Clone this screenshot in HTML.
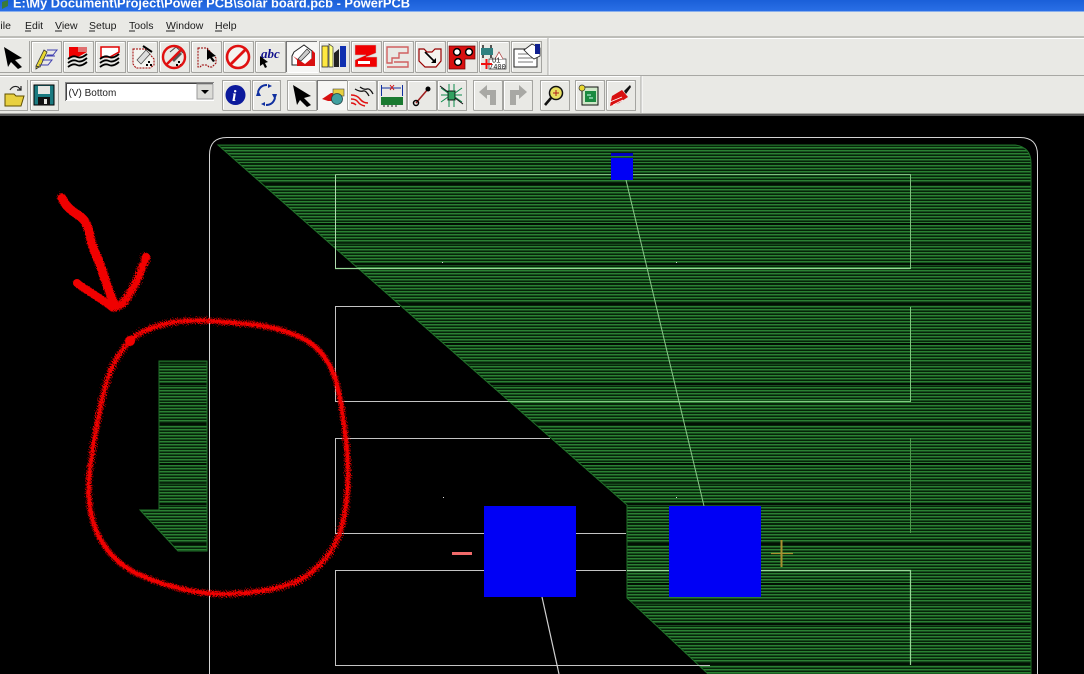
<!DOCTYPE html>
<html><head><meta charset="utf-8"><style>
html,body{margin:0;padding:0;background:#000;width:1084px;height:674px;overflow:hidden}
svg{display:block;position:absolute;left:0;top:0}
.m{font:10.5px "Liberation Sans",sans-serif;fill:#1a1a1a}
</style></head><body>
<svg width="1084" height="674" viewBox="0 0 1084 674" xmlns="http://www.w3.org/2000/svg">
<defs>
<linearGradient id="tb" x1="0" y1="0" x2="0" y2="1"><stop offset="0" stop-color="#1a5fd8"/><stop offset="1" stop-color="#2a6fe6"/></linearGradient>
<pattern id="h" width="3" height="3" patternUnits="userSpaceOnUse"><rect width="3" height="3" fill="#062409"/><rect width="3" height="1" fill="#2b8033"/><rect y="1" width="3" height="1" fill="#174f1e"/></pattern>
<pattern id="d" width="40" height="40" patternUnits="userSpaceOnUse"><rect y="23" width="40" height="2" fill="#021004"/><rect y="3" width="40" height="1" fill="#041c08" opacity=".8"/></pattern>
<filter id="rough" x="-10%" y="-10%" width="120%" height="120%"><feTurbulence type="fractalNoise" baseFrequency=".9" numOctaves="2" seed="4"/><feDisplacementMap in="SourceGraphic" scale="7"/></filter>
</defs>
<!-- chrome -->
<rect width="1084" height="116" fill="#e9e9e5"/>
<rect width="1084" height="11" fill="url(#tb)"/>
<rect y="11" width="1084" height="1" fill="#8ab0ec"/>
<text x="13" y="7.500" font-family="Liberation Sans,sans-serif" font-weight="bold" font-size="13" fill="#fff" textLength="397" lengthAdjust="spacingAndGlyphs">E:\My Document\Project\Power PCB\solar board.pcb - PowerPCB</text>
<path d="M2 2l6-2v6l-6 3z" fill="#3a7a3a"/>
<text class="m" x="-6" y="29">File</text>
<text class="m" x="25" y="29">Edit</text><path d="M25 31h6" stroke="#222"/>
<text class="m" x="55" y="29">View</text><path d="M55 31h7" stroke="#222"/>
<text class="m" x="89" y="29">Setup</text><path d="M89 31h6" stroke="#222"/>
<text class="m" x="129" y="29">Tools</text><path d="M129 31h6" stroke="#222"/>
<text class="m" x="166" y="29">Window</text><path d="M166 31h9" stroke="#222"/>
<text class="m" x="215" y="29">Help</text><path d="M215 31h7" stroke="#222"/>
<rect y="36" width="1084" height="2" fill="#bdbdb8"/><rect y="38" width="1084" height="1" fill="#fff"/>
<path d="M548 38v37" stroke="#a8a8a4"/><path d="M549 38v37" stroke="#fff"/>
<rect y="75" width="1084" height="1" fill="#a8a8a4"/><rect y="76" width="642" height="1" fill="#fff"/>
<path d="M641 76v37" stroke="#a8a8a4"/><path d="M642 76v37" stroke="#fff"/>
<rect y="113" width="1084" height="1" fill="#a8a8a4"/><rect y="114" width="1084" height="2" fill="#555"/>
<!-- button frames -->
<g fill="none" stroke-width="1">
<g>
<path d="M-1 72.500H29.500V41" stroke="#a4a4a0"/>
<path d="M31.500 72V41.500H61M61.500 41V72.500H31.500" stroke="#a4a4a0"/><path d="M32.500 71V42.500H60" stroke="#fff"/>
<path d="M63.500 72V41.500H93M93.500 41V72.500H63.500" stroke="#a4a4a0"/><path d="M64.500 71V42.500H92" stroke="#fff"/>
<path d="M95.500 72V41.500H125M125.500 41V72.500H95.500" stroke="#a4a4a0"/><path d="M96.500 71V42.500H124" stroke="#fff"/>
<path d="M127.500 72V41.500H157M157.500 41V72.500H127.500" stroke="#a4a4a0"/><path d="M128.500 71V42.500H156" stroke="#fff"/>
<path d="M159.500 72V41.500H189M189.500 41V72.500H159.500" stroke="#a4a4a0"/><path d="M160.500 71V42.500H188" stroke="#fff"/>
<path d="M191.500 72V41.500H221M221.500 41V72.500H191.500" stroke="#a4a4a0"/><path d="M192.500 71V42.500H220" stroke="#fff"/>
<path d="M223.500 72V41.500H253M253.500 41V72.500H223.500" stroke="#a4a4a0"/><path d="M224.500 71V42.500H252" stroke="#fff"/>
<path d="M255.500 72V41.500H285M285.500 41V72.500H255.500" stroke="#a4a4a0"/><path d="M256.500 71V42.500H284" stroke="#fff"/>
<rect x="287" y="41" width="30" height="31" fill="#f6f6f4" stroke="none"/><path d="M286.500 72V41.500H317" stroke="#777"/><path d="M287.500 72.500H318V41" stroke="#fff"/>
<path d="M319.500 72V41.500H349M349.500 41V72.500H319.500" stroke="#a4a4a0"/><path d="M320.500 71V42.500H348" stroke="#fff"/>
<path d="M351.500 72V41.500H381M381.500 41V72.500H351.500" stroke="#a4a4a0"/><path d="M352.500 71V42.500H380" stroke="#fff"/>
<path d="M383.500 72V41.500H413M413.500 41V72.500H383.500" stroke="#a4a4a0"/><path d="M384.500 71V42.500H412" stroke="#fff"/>
<path d="M415.500 72V41.500H445M445.500 41V72.500H415.500" stroke="#a4a4a0"/><path d="M416.500 71V42.500H444" stroke="#fff"/>
<path d="M447.500 72V41.500H477M477.500 41V72.500H447.500" stroke="#a4a4a0"/><path d="M448.500 71V42.500H476" stroke="#fff"/>
<path d="M479.500 72V41.500H509M509.500 41V72.500H479.500" stroke="#a4a4a0"/><path d="M480.500 71V42.500H508" stroke="#fff"/>
<path d="M511.500 72V41.500H541M541.500 41V72.500H511.500" stroke="#a4a4a0"/><path d="M512.500 71V42.500H540" stroke="#fff"/>
</g>
<g>
<path d="M-1 110.500H27.500V80" stroke="#a4a4a0"/>
<path d="M30.500 110V80.500H58M58.500 80V110.500H30.500" stroke="#a4a4a0"/><path d="M31.500 109V81.500H57" stroke="#fff"/>
<path d="M222.500 110V80.500H250M250.500 80V110.500H222.500" stroke="#a4a4a0"/><path d="M223.500 109V81.500H249" stroke="#fff"/>
<path d="M252.500 110V80.500H280M280.500 80V110.500H252.500" stroke="#a4a4a0"/><path d="M253.500 109V81.500H279" stroke="#fff"/>
<path d="M287.500 110V80.500H316M316.500 80V110.500H287.500" stroke="#a4a4a0"/><path d="M288.500 109V81.500H315" stroke="#fff"/>
<rect x="318" y="81" width="29" height="29" fill="#f6f6f4" stroke="none"/><path d="M317.500 110V80.500H347" stroke="#777"/>
<path d="M347.500 110V80.500H376M376.500 80V110.500H347.500" stroke="#a4a4a0"/><path d="M348.500 109V81.500H375" stroke="#fff"/>
<path d="M377.500 110V80.500H406M406.500 80V110.500H377.500" stroke="#a4a4a0"/><path d="M378.500 109V81.500H405" stroke="#fff"/>
<path d="M407.500 110V80.500H436M436.500 80V110.500H407.500" stroke="#a4a4a0"/><path d="M408.500 109V81.500H435" stroke="#fff"/>
<path d="M437.500 110V80.500H466M466.500 80V110.500H437.500" stroke="#a4a4a0"/><path d="M438.500 109V81.500H465" stroke="#fff"/>
<path d="M473.500 110V80.500H502M502.500 80V110.500H473.500" stroke="#a4a4a0"/><path d="M474.500 109V81.500H501" stroke="#fff"/>
<path d="M503.500 110V80.500H532M532.500 80V110.500H503.500" stroke="#a4a4a0"/><path d="M504.500 109V81.500H531" stroke="#fff"/>
<path d="M540.500 110V80.500H569M569.500 80V110.500H540.500" stroke="#a4a4a0"/><path d="M541.500 109V81.500H568" stroke="#fff"/>
<path d="M575.500 110V80.500H604M604.500 80V110.500H575.500" stroke="#a4a4a0"/><path d="M576.500 109V81.500H603" stroke="#fff"/>
<path d="M606.500 110V80.500H635M635.500 80V110.500H606.500" stroke="#a4a4a0"/><path d="M607.500 109V81.500H634" stroke="#fff"/>
</g>
</g>
<!-- row 1 icons -->
<path d="M4 47L22 58L15 60L22 67L18 69L11 62L8 67Z" fill="#000"/>
<path d="M36 66L44 50L47 52L40 67ZM36 66l0 3 3-2z" fill="#e8d830" stroke="#333" stroke-width=".8"/>
<path d="M47 50h10l-4 5h-6M42 60h10l-4 5H39M46 56h9" fill="none" stroke="#4040b0" stroke-width="1"/>
<path d="M69 47h18v5l-9 5H69z" fill="#f00000"/><path d="M78 47h9v5h-9z" fill="#e07070"/><path d="M68 59q5-4 9-2t10-3M68 63q5-4 9-2t10-3M68 67q5-4 9-2t10-3" fill="none" stroke="#000" stroke-width="1.800"/>
<path d="M101 47h18v5l-9 5h-9z" fill="#fff" stroke="#e00000" stroke-width="1.500"/><path d="M100 59q5-4 9-2t10-3M100 63q5-4 9-2t10-3M100 67q5-4 9-2t10-3" fill="none" stroke="#000" stroke-width="1.800"/>
<path d="M133 49h12l9 10v6l-4 3h-14l-3-4v-12z" fill="#f4f4f0" stroke="#a00000" stroke-width="1" stroke-dasharray="2 1"/><path d="M137 60l9-10 4 4-9 10z" fill="#ddd" stroke="#444" stroke-width=".7"/><path d="M143 46l9 6" stroke="#000" stroke-width="2"/><path d="M146 64h2v2h-2zM150 64h2v2h-2zM148 61h2v2h-2z" fill="#000"/>
<path d="M170 52l6-5 7 6" fill="none" stroke="#444"/><path d="M172 60l8-8 2 2-8 8z" fill="#555"/><path d="M176 64h2v2h-2zM180 64h2v2h-2zM178 61h2v2h-2z" fill="#000"/>
<circle cx="174" cy="57" r="11" fill="none" stroke="#e01010" stroke-width="2.400"/><path d="M166 65L182 49" stroke="#e01010" stroke-width="2.400"/>
<path d="M198 48h9l9 10v5l-4 4h-3l-2-2h-5l-2 2h-2z" fill="none" stroke="#900" stroke-width="1" stroke-dasharray="2 1"/><path d="M207 49l9 7-4 1 3 4-2 1-3-4-3 2z" fill="#000"/>
<circle cx="238" cy="57" r="11" fill="#f4f4f0" stroke="#e01010" stroke-width="2.600"/><path d="M230 65L246 49" stroke="#e01010" stroke-width="2.800"/>
<text x="261" y="58" font-family="Liberation Serif,serif" font-style="italic" font-weight="bold" font-size="13" fill="#10108c">abc</text><path d="M260 56l8 6-3 1 2 4-2 1-2-4-3 2z" fill="#000"/>
<path d="M294 52l10-7 8 6v14h-20v-9z" fill="#fff" stroke="#222"/><path d="M293 56l4 4 0 6h18V53l-3-3v8l-7 6z" fill="#d81010"/><path d="M298 59l9-10 3 3-9 9z" fill="#ccc" stroke="#333" stroke-width=".7"/>
<path d="M322 46h6v21h-6z" fill="#ffe840" stroke="#222" stroke-width=".7"/><path d="M329 44l4 3v20h-4z" fill="#ffff80" stroke="#333" stroke-width=".7"/><path d="M334 53l5-4v18h-5z" fill="#222"/><path d="M340 46h6v21h-6z" fill="#1030b0"/>
<path d="M355 45h21v8l-10 4h11v10h-22v-7l11-5h-11z" fill="#f00000" stroke="#c0c0bc" stroke-width=".5"/><path d="M358 61h12v3h-12z" fill="#fff"/>
<path d="M387 47h21v6h-9v5h-7v5h-5zM394 62h14v5h-21" fill="none" stroke="#d06060" stroke-width="1.400"/>
<path d="M419 49h5l3 3h5l3-3h6v12l-5 6h-11l-6-6z" fill="#f4f4f0" stroke="#900" stroke-width="1.200"/><path d="M425 52l9 9" stroke="#000" stroke-width="1.600"/><path d="M436 63l-5 0 5-5z" fill="#000"/>
<path d="M449 46h26v13h-10v10h-16z" fill="#d81010" stroke="#600" stroke-width=".7"/><circle cx="457" cy="52" r="3.400" fill="#fff" stroke="#000" stroke-width="1.500"/><circle cx="469" cy="52" r="3.400" fill="#fff" stroke="#000" stroke-width="1.500"/><circle cx="458" cy="62" r="3.400" fill="#fff" stroke="#000" stroke-width="1.500"/>
<rect x="481" y="48" width="12" height="7" fill="#308080"/><path d="M483 45v3M491 45v3M483 55v3M491 55v3" stroke="#222" stroke-width="1.500"/><path d="M489 59h17v10h-17z" fill="#fff" stroke="#333" stroke-width=".7"/><path d="M495 59l4-7 4 7" fill="#fff" stroke="#a33" stroke-width=".7"/>
<text x="492" y="62.500" font-family="Liberation Mono,monospace" font-size="7" fill="#111">U1</text><text x="489" y="69" font-family="Liberation Mono,monospace" font-size="7" fill="#111">7400</text>
<path d="M481 64h11M486.500 59v10" stroke="#f01010" stroke-width="2"/>
<path d="M514 49h23v18h-23z" fill="#fff" stroke="#222"/><path d="M518 54h15M518 58h15M518 62h15" stroke="#777"/><path d="M524 50l8-6 8 4v8l-6 3-5-4z" fill="#fff" stroke="#222" stroke-width=".8"/><path d="M535 44h5v10h-5z" fill="#102090"/>
<!-- row 2 icons -->
<path d="M5 94h9l2 2h8l-3 10H5z" fill="#e8d040" stroke="#605000"/><path d="M10 90q3-5 8-3l3 3m0-4v4h-4" fill="none" stroke="#222" stroke-width="1.200"/>
<rect x="34" y="85" width="20" height="20" fill="#1a7a80" stroke="#000"/><rect x="38" y="86" width="12" height="8" fill="#e6e6e2"/><rect x="38" y="97" width="12" height="8" fill="#111"/><rect x="44" y="99" width="3" height="5" fill="#e6e6e2"/>
<rect x="66" y="83" width="148" height="18" fill="#fff"/>
<path d="M65.500 101V82.500H214" stroke="#888" fill="none"/><path d="M66.500 100V83.500H213" stroke="#444" fill="none"/>
<text x="68.500" y="96" font-family="Liberation Sans,sans-serif" font-size="10" fill="#222">(V) Bottom</text>
<rect x="197" y="84" width="16" height="15" fill="#dcdcd8" stroke="#999"/><path d="M201 90h8l-4 4z" fill="#000"/>
<circle cx="235.500" cy="95" r="10" fill="#0c1a9c"/><text x="232" y="101" font-family="Liberation Serif,serif" font-style="italic" font-weight="bold" font-size="16" fill="#fff">i</text>
<path d="M258 92q2-7 9-7M275 98q-2 7-9 7" fill="none" stroke="#1030a0" stroke-width="2"/><path d="M256 96l5 0-3-6zM277 94l-5 0 3 6z" fill="#1030a0"/><path d="M268 84l4 2-4 2zM265 102l-4 2 4 2z" fill="#1030a0"/>
<path d="M293 85L311 96L304 98L311 105L307 107L300 100L297 105Z" fill="#000"/>
<path d="M322 99l9-6h6v8h-9z" fill="#d81010"/><rect x="333" y="89" width="11" height="7" fill="#e8d040" stroke="#444" stroke-width=".6"/><circle cx="337" cy="99" r="5.500" fill="#40a0a0" stroke="#244" stroke-width=".8"/>
<path d="M355 89q5 3 8 2t6 5M360 87q4 3 7 2t6 5" fill="none" stroke="#111" stroke-width="1.300"/><path d="M351 95q6 0 9 4t8 4M351 99q5 0 7 3t7 4M351 103q3 0 5 2" fill="none" stroke="#e01010" stroke-width="1.500"/>
<path d="M381.500 85v11M402.500 85v11M382 88h19" stroke="#1030a0" fill="none"/><path d="M390 85l4 5m0-5l-4 5" stroke="#d01010"/><rect x="381" y="97" width="22" height="8" fill="#1a7a30"/><path d="M384 105v2M388 105v2M392 105v2M396 105v2" stroke="#222"/>
<path d="M416 103L428 89" stroke="#a02020" stroke-width="1.600"/><circle cx="416" cy="103" r="2.500" fill="none" stroke="#000" stroke-width="1.500"/><circle cx="428" cy="89" r="2.500" fill="#000"/>
<rect x="448" y="91" width="7" height="9" fill="#30a060" stroke="#111"/><path d="M441 88l7 5M441 95h7M441 102l7-5M462 88l-7 5M462 95h-7M462 102l-7-5M449 84v7M454 84v7M449 100v7M454 100v7" stroke="#0a8a4a" fill="none"/><path d="M440 86l8 6M463 104l-8-6" stroke="#111" fill="none"/>
<path d="M479 92l8-7v5h9v15h-6V95h-3v4z" fill="#a8a8a4"/>
<path d="M527 92l-8-7v5h-9v15h6V95h3v4z" fill="#a8a8a4"/>
<circle cx="556" cy="93" r="6.500" fill="#e8e060" stroke="#111" stroke-width="1.500"/><path d="M556 90v6M553 93h6" stroke="#b02020"/><path d="M551 98l-6 7" stroke="#111" stroke-width="2.600"/>
<rect x="582" y="87" width="16" height="18" fill="#cfe8c8" stroke="#111"/><rect x="585" y="91" width="11" height="11" fill="#1a8a40"/><circle cx="582" cy="88" r="3" fill="#e8d830" stroke="#333" stroke-width=".7"/><path d="M587 95h4M589 98h4" stroke="#cfe"/>
<path d="M612 96l10-6 6 7-9 6-9 3z" fill="#d81010"/><path d="M624 91l6-6 1 2-5 7z" fill="#111"/><path d="M610 102l12-5M613 105l10-5" stroke="#fff" stroke-width=".8"/>
<!-- PCB canvas -->
<rect y="116" width="1084" height="558" fill="#000"/>
<g>
<path d="M218 145H1015Q1031 147 1031 163V674H708L627 598V505L218 145Z" fill="url(#h)"/>
<path d="M218 145H1015Q1031 147 1031 163V674H708L627 598V505L218 145Z" fill="url(#d)"/>
<path d="M218 145H1015Q1031 147 1031 163V674H708L627 598V505Z" fill="none" stroke="#1f6f28" stroke-width="1"/>
<path d="M159 361H207V551H178L140 510H159Z" fill="url(#h)"/>
<path d="M159 361H207V551H178L140 510H159Z" fill="url(#d)"/>
<path d="M159 361H207V551H178L140 510H159Z" fill="none" stroke="#1f6f28" stroke-width="1"/>
</g>
<!-- lines -->
<g fill="none" stroke="#c4c4c4" stroke-width="1">
<path d="M209.500 674V155Q209.500 137.500 227 137.500H1020Q1037.500 137.500 1037.500 155V674" stroke="#d4d4d4"/>
<path d="M335.500 174.500V269" stroke="#b0dab0"/><path d="M335.500 174.500H910.500V269" stroke="#80c080"/><path d="M335 268.500H910.500" stroke="#98d898" stroke-width="1.300"/>
<path d="M400 306.500H335.500V401.500H508"/><path d="M508 401.500H910.500V307" stroke="#80c880"/>
<path d="M550 438.500H335.500V533.500H484M576 533.500H626"/><path d="M910.500 438V533" stroke="#4f9a4f"/>
<path d="M335.500 665V570.500H484M576 570.500H626"/><path d="M627 570.500H669M761 570.500H910.500V665" stroke="#98d898" stroke-width="1.200"/>
<path d="M335 665.500H710"/>
<path d="M626 180L704 506" stroke="#8ac88a"/>
<path d="M542 597L559 674" stroke="#d0d0d0" stroke-width="1.200"/>
</g>
<!-- pads -->
<rect x="484" y="506" width="92" height="91" fill="#0000f5"/>
<rect x="669" y="506" width="92" height="91" fill="#0000f5"/>
<rect x="611" y="158" width="22" height="22" fill="#0000f5"/>
<rect x="611" y="153" width="22" height="3" fill="#0000c0"/>
<path d="M452 553.500H472" stroke="#f06a6a" stroke-width="3"/>
<path d="M771 553.500H793" stroke="#a89030" stroke-width="1.200"/><path d="M781.500 540V567" stroke="#a89030" stroke-width="2"/>
<rect x="442" y="262" width="1" height="1" fill="#ddd"/><rect x="676" y="262" width="1" height="1" fill="#ddd"/><rect x="443" y="497" width="1" height="1" fill="#ddd"/><rect x="676" y="497" width="1" height="1" fill="#ddd"/>
<!-- red marker -->
<g fill="none" stroke="#f00000" stroke-linecap="round" stroke-linejoin="round">
<g filter="url(#rough)">
<path stroke-width="4" d="M133 338C143 330 158 325 175 322C195 319 215 321 235 323C258 324 280 328 300 337C317 345 328 358 335 378C342 400 344 425 347 450C349 475 348 500 343 522C338 545 325 563 305 577C285 589 255 593 225 594C195 594 165 586 140 575C120 566 105 552 96 530C88 510 87 485 91 462C94 440 98 415 104 392C108 372 118 352 133 338"/>
<path stroke-width="7" stroke-dasharray="1 1.600" stroke-linecap="butt" d="M133 338C143 330 158 325 175 322C195 319 215 321 235 323C258 324 280 328 300 337C317 345 328 358 335 378C342 400 344 425 347 450C349 475 348 500 343 522C338 545 325 563 305 577C285 589 255 593 225 594C195 594 165 586 140 575C120 566 105 552 96 530C88 510 87 485 91 462C94 440 98 415 104 392C108 372 118 352 133 338"/>
<path stroke-width="9" d="M62 198C66 207 72 211 78 215C86 220 88 226 90 236C92 248 98 258 102 270C106 282 110 295 115 306"/>
<path stroke-width="8" d="M78 284C88 291 100 298 112 307C120 309 126 300 130 293C136 284 141 272 146 257"/>
</g>
<circle cx="62" cy="198" r="4" fill="#f00000" stroke="none"/>
<circle cx="77" cy="283" r="4" fill="#f00000" stroke="none"/>
<circle cx="146" cy="257" r="4" fill="#f00000" stroke="none"/>
<circle cx="130" cy="341" r="5" fill="#f00000" stroke="none"/>
</g>
</svg>
</body></html>
